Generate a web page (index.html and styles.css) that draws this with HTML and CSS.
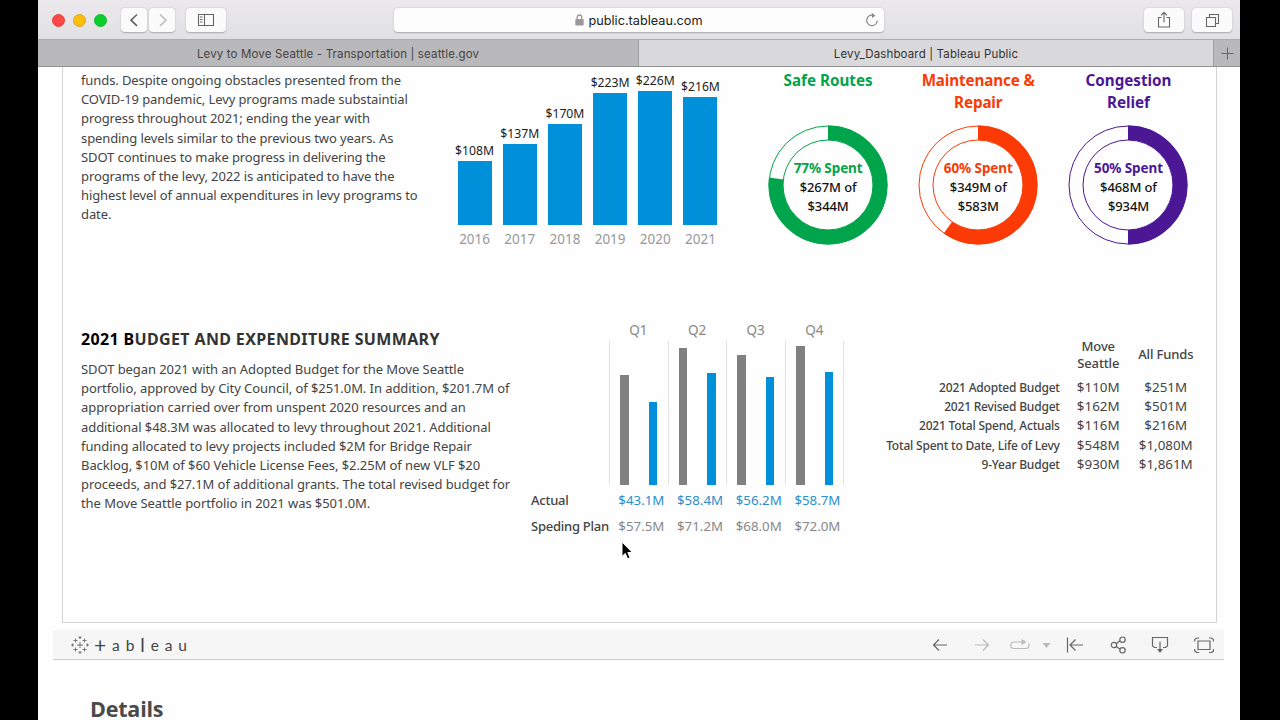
FILE: index.html
```html
<!DOCTYPE html>
<html lang="en">
<head>
  <meta charset="UTF-8" />
  <title>Levy_Dashboard | Tableau Public</title>
  <link rel="stylesheet" href="styles.css">
</head>
<body>
  <div class="browser">
    <!-- TOOLBAR -->
    <header class="toolbar">
      <div class="lights">
        <span class="light red"></span>
        <span class="light yellow"></span>
        <span class="light green"></span>
      </div>
      <div class="history">
        <button class="tool-btn"><svg width="26" height="24" viewBox="0 0 26 24"><path d="M16 6.500l-6 5.700 6 5.700" stroke="#666" stroke-width="1.700" /></svg></button>
        <button class="tool-btn"><svg width="26" height="24" viewBox="0 0 26 24"><path d="M11 6.500l6 5.700-6 5.700" stroke="#bbb" stroke-width="1.500" /></svg></button>
      </div>
      <button class="tool-btn wide"><svg width="40" height="24" viewBox="0 0 40 24"><path d="M12.500 6.500h15v11h-15zM18.500 6.500v11M14 9h2.500M14 11.500h2.500M14 14h2.500" stroke="#666" stroke-width="1.100" /></svg></button>
      <div class="address">
        <svg class="lock" width="9" height="12" viewBox="0 0 9 12"><path d="M2.200 6V3.300a2.300 2.300 0 0 1 4.600 0V6" stroke="#999" stroke-width="1.300" /><rect x="0.300" y="5" width="8.400" height="6.500" rx="0.800" fill="#999" /></svg>
        <span>public.tableau.com</span>
        <svg class="reload" width="14" height="16" viewBox="0 0 14 16"><path d="M8.500 3.300A5.300 5.300 0 1 0 12.300 8.500" stroke="#888" stroke-width="1.200" /><path d="M6.800 0.800l3.700 2.900-3.500 2.400z" fill="#888" /></svg>
      </div>
      <button class="tool-btn wide share"><svg width="40" height="24" viewBox="0 0 40 24"><path d="M17.500 9.500h-3v9.500h11V9.500h-3M20 14.500V4.500M17 7.300l3-3 3 3" stroke="#666" stroke-width="1.100" /></svg></button>
      <button class="tool-btn wide"><svg width="40" height="24" viewBox="0 0 40 24"><path d="M14.500 9.500h9v9h-9zM17.500 9V6.500h9v9H24" stroke="#666" stroke-width="1.100" /></svg></button>
    </header>
    <nav class="tabs">
      <div class="tab">Levy to Move Seattle - Transportation | seattle.gov</div>
      <div class="tab active">Levy_Dashboard | Tableau Public</div>
      <div class="tab-add"><svg width="13" height="13" viewBox="0 0 13 13"><path d="M6.500 0.500v12M0.500 6.500h12" stroke="#666" /></svg></div>
    </nav>

    <!-- DASHBOARD -->
    <main class="dashboard">
      <section class="overview">
        <p class="text">funds. Despite ongoing obstacles presented from the<br>
          COVID-19 pandemic, Levy programs made substaintial<br>
          progress throughout 2021; ending the year with<br>
          spending levels similar to the previous two years. As<br>
          SDOT continues to make progress in delivering the<br>
          programs of the levy, 2022 is anticipated to have the<br>
          highest level of annual expenditures in levy programs to<br>
          date.</p>
        <div class="years">
          <div class="year"><b>$108M</b><i style="height: 64px"></i><span>2016</span></div>
          <div class="year"><b>$137M</b><i style="height: 81px"></i><span>2017</span></div>
          <div class="year"><b>$170M</b><i style="height: 101px"></i><span>2018</span></div>
          <div class="year"><b>$223M</b><i style="height: 132px"></i><span>2019</span></div>
          <div class="year"><b>$226M</b><i style="height: 134px"></i><span>2020</span></div>
          <div class="year"><b>$216M</b><i style="height: 128px"></i><span>2021</span></div>
        </div>
        <div class="donuts">
          <div class="donut safe">
            <h3>Safe Routes</h3>
            <div class="ring">
              <svg width="120" height="120" viewBox="0 0 120 120"><circle cx="60" cy="60" r="59" /><circle cx="60" cy="60" r="45" /><circle class="arc" cx="60" cy="60" r="52.200" pathLength="100" stroke-dasharray="77 100" transform="rotate(-90 60 60)" /></svg>
              <p><b>77% Spent</b><br>$267M of<br>$344M</p>
            </div>
          </div>
          <div class="donut repair">
            <h3>Maintenance &amp;<br>Repair</h3>
            <div class="ring">
              <svg width="120" height="120" viewBox="0 0 120 120"><circle cx="60" cy="60" r="59" /><circle cx="60" cy="60" r="45" /><circle class="arc" cx="60" cy="60" r="52.200" pathLength="100" stroke-dasharray="59.800 100" transform="rotate(-90 60 60)" /></svg>
              <p><b>60% Spent</b><br>$349M of<br>$583M</p>
            </div>
          </div>
          <div class="donut relief">
            <h3>Congestion<br>Relief</h3>
            <div class="ring">
              <svg width="120" height="120" viewBox="0 0 120 120"><circle cx="60" cy="60" r="59" /><circle cx="60" cy="60" r="45" /><circle class="arc" cx="60" cy="60" r="52.200" pathLength="100" stroke-dasharray="50 100" transform="rotate(-90 60 60)" /></svg>
              <p><b>50% Spent</b><br>$468M of<br>$934M</p>
            </div>
          </div>
        </div>
      </section>

      <section class="budget">
        <div class="summary">
          <h2><span>2021 B</span>UDGET AND EXPENDITURE SUMMARY</h2>
          <p class="text">SDOT began 2021 with an Adopted Budget for the Move Seattle<br>
            portfolio, approved by City Council, of $251.0M. In addition, $201.7M of<br>
            appropriation carried over from unspent 2020 resources and an<br>
            additional $48.3M was allocated to levy throughout 2021. Additional<br>
            funding allocated to levy projects included $2M for Bridge Repair<br>
            Backlog, $10M of $60 Vehicle License Fees, $2.25M of new VLF $20<br>
            proceeds, and $27.1M of additional grants. The total revised budget for<br>
            the Move Seattle portfolio in 2021 was $501.0M.</p>
        </div>
        <div class="quarters">
          <div class="q-labels"><span>Actual</span><span>Speding Plan</span></div>
          <div class="quarter">
            <h4>Q1</h4>
            <div class="pane"><i style="height: 110px"></i><i class="actual" style="height: 83px"></i></div>
            <span class="actual-val">$43.1M</span><span>$57.5M</span>
          </div>
          <div class="quarter">
            <h4>Q2</h4>
            <div class="pane"><i style="height: 137px"></i><i class="actual" style="height: 112px"></i></div>
            <span class="actual-val">$58.4M</span><span>$71.2M</span>
          </div>
          <div class="quarter">
            <h4>Q3</h4>
            <div class="pane"><i style="height: 130px"></i><i class="actual" style="height: 108px"></i></div>
            <span class="actual-val">$56.2M</span><span>$68.0M</span>
          </div>
          <div class="quarter">
            <h4>Q4</h4>
            <div class="pane last"><i style="height: 139px"></i><i class="actual" style="height: 113px"></i></div>
            <span class="actual-val">$58.7M</span><span>$72.0M</span>
          </div>
        </div>
        <table class="funds">
          <tr><th></th><th class="move">Move<br>Seattle</th><th>All Funds</th></tr>
          <tr><td>2021 Adopted Budget</td><td>$110M</td><td>$251M</td></tr>
          <tr><td>2021 Revised Budget</td><td>$162M</td><td>$501M</td></tr>
          <tr><td>2021 Total Spend, Actuals</td><td>$116M</td><td>$216M</td></tr>
          <tr><td>Total Spent to Date, Life of Levy</td><td>$548M</td><td>$1,080M</td></tr>
          <tr><td>9-Year Budget</td><td>$930M</td><td>$1,861M</td></tr>
        </table>
      </section>
    </main>

    <!-- TABLEAU BAR -->
    <footer class="tableau-bar">
      <svg class="mark" width="18" height="18" viewBox="0 0 18 18"><path d="M9 6v6M6 9h6M9 0v3M7.500 1.500h3M9 15v3M7.500 16.500h3M1.500 7.500v3M0 9h3M16.500 7.500v3M15 9h3M4.500 2.500v4M2.500 4.500h4M13.500 2.500v4M11.500 4.500h4M4.500 11.500v4M2.500 13.500h4M13.500 11.500v4M11.500 13.500h4" stroke="#777" stroke-width="1" /></svg>
      <div class="wordmark"><span class="plus">+</span><span>a</span><span>b</span><span class="tall">l</span><span>e</span><span>a</span><span>u</span></div>
      <div class="actions">
        <svg width="16" height="16" viewBox="0 0 16 16"><path d="M15 8H1.500M7 2.500L1.500 8 7 13.500" /></svg>
        <svg class="off" width="16" height="16" viewBox="0 0 16 16"><path d="M1 8h13.500M9 2.500L14.500 8 9 13.500" /></svg>
        <svg class="off redo" width="20" height="16" viewBox="0 0 20 16"><path d="M13 5H4a3.200 3.200 0 0 0 0 6.500h12a3.200 3.200 0 0 0 2.500-5" /><path class="fill" d="M11.500 2l5 3-5 3z" /></svg>
        <svg class="off caret" width="9" height="16" viewBox="0 0 9 16"><path class="fill" d="M0.500 6h8l-4 5z" /></svg>
        <svg class="revert" width="18" height="16" viewBox="0 0 18 16"><path d="M1.500 0.500v15M17 8H4M9.500 2.500L4 8l5.500 5.500" /></svg>
        <svg class="share-icon" width="17" height="18" viewBox="0 0 17 18"><path d="M6 7.700l4-3M6 10.300l4 3" /><circle cx="4" cy="9" r="2.700" /><circle cx="12.500" cy="3.700" r="2.700" /><circle cx="12.500" cy="14.300" r="2.700" /></svg>
        <svg class="download" width="18" height="18" viewBox="0 0 18 18"><path d="M6 11.500H3.500L1.500 10V1.500h15V10l-2 1.500H12M9 5.500v9" /><path class="fill" d="M6 13h6l-3 4z" /></svg>
        <svg width="20" height="16" viewBox="0 0 20 16"><path d="M4 4h12v8.500H4zM0.700 4.500V2.500l2-1.500h2.500M15 1h2.500l2 1.500v2M19.500 12v2l-2 1.500H15M5.200 15.500H2.700l-2-1.500v-2" /></svg>
      </div>
    </footer>

    <h1 class="details">Details</h1>
  </div>

  <svg class="cursor" width="14" height="20" viewBox="0 0 14 20"><path d="M1 1v14.500l3.300-3.100 2.300 5.400 2.500-1-2.300-5.300h4.500z" fill="#000" stroke="#fff" stroke-width="1" /></svg>
</body>
</html>
```
FILE: styles.css
```css
* {
  box-sizing: border-box;
  margin: 0;
  padding: 0;
}
body {
  background: #000;
  height: 720px;
  overflow: hidden;
  position: relative;
  font-family: "Noto Sans", sans-serif;
  font-size: 13px;
  color: #444;
}
svg {
  display: block;
  fill: none;
}
.browser {
  width: 1202px;
  height: 720px;
  margin-left: 38px;
  background: #fefefe;
  overflow: hidden;
}

/* toolbar */
.toolbar {
  display: flex;
  align-items: center;
  height: 39px;
  padding: 1px 8px 0 14px;
  background: linear-gradient(#ebe9eb, #e1e0e2);
}
.lights {
  display: flex;
  gap: 8px;
  width: 69px;
}
.light {
  width: 13px;
  height: 13px;
  border-radius: 50%;
  border: 1px solid #e0443e;
  background: #fc4945;
}
.light.yellow {
  background: #fdbe0a;
  border-color: #dfa420;
}
.light.green {
  background: #0bcf2c;
  border-color: #15b62c;
}
.history {
  display: flex;
  gap: 2px;
  margin-right: 11px;
}
.tool-btn {
  width: 26px;
  height: 24px;
  border: 0;
  border-radius: 4px;
  background: #fbfbfb;
  box-shadow: 0 0.5px 1.5px #aaa;
}
.tool-btn.wide {
  width: 40px;
}
.address {
  display: flex;
  align-items: center;
  justify-content: center;
  position: relative;
  width: 490px;
  height: 24px;
  margin-left: 168px;
  background: #fdfdfd;
  border-radius: 4px;
  box-shadow: 0 0.5px 1.5px #aaa;
  font-family: Inter, sans-serif;
  font-size: 12.7px;
  line-height: 22px;
  color: #222;
}
.address span {
  padding-top: 1px;
}
.lock {
  margin-right: 4px;
}
.reload {
  position: absolute;
  right: 5px;
  top: 4px;
}
.share {
  margin-left: auto;
  margin-right: 8px;
}
.tabs {
  display: flex;
  height: 28px;
  border-top: 1px solid #adacae;
  border-bottom: 1px solid #929193;
  background: #b9b8ba;
  font-family: Inter, sans-serif;
  font-size: 11.5px;
  letter-spacing: 0.15px;
}
.tab {
  width: 600px;
  line-height: 28px;
  text-align: center;
  color: #454446;
}
.tab.active {
  width: 576px;
  background: #d9d8da;
  border-left: 1px solid #a0a0a0;
  border-right: 1px solid #a0a0a0;
  color: #333;
}
.tab-add {
  flex: 1;
  display: flex;
  align-items: center;
  justify-content: center;
}

/* dashboard */
.dashboard {
  height: 556px;
  margin: 0 23px 0 24px;
  border: 1px solid #d5d5d5;
  border-top: 0;
}
.text {
  line-height: 19.2px;
  letter-spacing: -0.07px;
  white-space: nowrap;
}
.overview {
  display: flex;
  height: 259px;
  padding: 4px 0 0 18px;
}
.overview .text {
  width: 371px;
  letter-spacing: -0.1px;
}
.years {
  display: flex;
  align-items: flex-end;
  width: 271px;
  height: 177px;
}
.year {
  display: flex;
  flex-direction: column;
  align-items: center;
  width: 45.2px;
}
.year b {
  font-weight: 400;
  font-size: 12.2px;
  line-height: 18px;
  margin-bottom: 1px;
  color: #222;
}
.year i {
  width: 34px;
  background: #008fd9;
}
.year span {
  font-size: 13.5px;
  line-height: 23px;
  margin-top: 3px;
  margin-bottom: -3px;
  color: #999;
}
.donuts {
  display: flex;
  margin-left: 30px;
}
.donut {
  width: 150.2px;
  text-align: center;
}
.donut h3 {
  height: 56px;
  font-size: 15.2px;
  font-weight: 700;
  line-height: 22px;
  margin-top: -2px;
}
.donut.repair h3 {
  letter-spacing: -0.1px;
}
.ring {
  display: grid;
  place-items: center;
}
.ring > * {
  grid-area: 1 / 1;
}
.ring circle {
  stroke: currentColor;
  stroke-width: 1;
}
.ring .arc {
  stroke-width: 14.6px;
}
.ring p {
  font-size: 13px;
  font-weight: 500;
  line-height: 19.2px;
  letter-spacing: -0.1px;
  color: #111;
  padding-top: 5px;
}
.ring b {
  font-size: 13.5px;
  font-weight: 700;
}
.safe, .safe b {
  color: #00a44a;
}
.repair, .repair b {
  color: #fc3a05;
}
.relief, .relief b {
  color: #4b1795;
}

/* budget */
.budget {
  display: flex;
  padding-left: 18px;
}
.summary {
  width: 450px;
}
.summary h2 {
  font-size: 16px;
  font-weight: 700;
  line-height: 26px;
  margin-bottom: 8px;
  letter-spacing: 0.36px;
  color: #333;
  white-space: nowrap;
}
.summary h2 span {
  color: #000;
}
.quarters {
  display: flex;
  margin-top: -6px;
}
.q-labels {
  display: flex;
  flex-direction: column;
  width: 78px;
  padding-top: 168px;
  font-weight: 500;
  line-height: 25.5px;
  letter-spacing: -0.25px;
  white-space: nowrap;
}
.quarter {
  width: 58.7px;
  display: flex;
  flex-direction: column;
  text-align: center;
  line-height: 25.5px;
  color: #888;
}
.quarter h4 {
  font-size: 13.5px;
  font-weight: 400;
  line-height: 20px;
}
.quarter > span {
  font-size: 13.3px;
  padding-left: 6px;
}
.pane {
  display: flex;
  align-items: flex-end;
  gap: 20px;
  height: 144px;
  margin: 1px 0 3px;
  padding-left: 10px;
  border-left: 1px solid #e4e4e4;
}
.pane.last {
  border-right: 1px solid #e4e4e4;
}
.pane i {
  width: 8.5px;
  background: #808080;
}
.pane i.actual {
  background: #008fd9;
}
.quarter .actual-val {
  color: #2a8fcc;
}
.funds {
  border-collapse: collapse;
  margin: 11px 0 0 32px;
  width: 324px;
  height: 137px;
  table-layout: fixed;
}
.funds th {
  font-weight: 500;
  line-height: 17px;
  height: 41px;
  padding-bottom: 6px;
  letter-spacing: -0.15px;
  white-space: nowrap;
}
.funds th:first-child {
  width: 186px;
}
.funds .move {
  width: 73px;
}
.funds td {
  font-size: 13.4px;
  line-height: 19.2px;
  height: 19.2px;
  text-align: center;
}
.funds td:first-child {
  padding-right: 2px;
  font-size: 12px;
  font-weight: 500;
  letter-spacing: -0.2px;
  text-align: right;
  white-space: nowrap;
}
.funds th:last-child,
.funds td:last-child {
  padding-right: 3px;
}

/* tableau bar */
.tableau-bar {
  display: flex;
  align-items: center;
  height: 30px;
  margin: 7px 16px 0 15px;
  padding: 0 10px 0 18px;
  background: #f6f6f6;
  border-bottom: 1px solid #ccc;
}
.wordmark {
  display: flex;
  align-items: center;
  gap: 5.9px;
  margin-left: 5px;
  font-family: Lato, sans-serif;
  font-size: 15.5px;
  line-height: 20px;
  color: #444;
}
.wordmark .plus {
  font-size: 21px;
}
.wordmark .tall {
  font-size: 19px;
}
.actions {
  display: flex;
  align-items: center;
  margin-left: auto;
}
.actions svg {
  margin-left: 26px;
  stroke: #666;
  stroke-width: 1.2;
}
.actions .off {
  stroke: #bbb;
}
.actions .fill {
  fill: #666;
  stroke: none;
}
.actions .off .fill {
  fill: #bbb;
}
.actions .redo {
  margin-left: 20px;
}
.actions .caret {
  margin-left: 12px;
}
.actions .revert {
  margin-left: 15px;
}
.actions .download {
  margin-left: 24px;
}
.actions svg:last-child {
  margin-left: 25px;
}

.details {
  height: 26px;
  margin: 34px 0 0 52px;
  font-family: "Open Sans", sans-serif;
  font-size: 21.5px;
  font-weight: 700;
  line-height: 30px;
  letter-spacing: -0.2px;
  color: #4a4a4a;
}
.cursor {
  position: absolute;
  left: 621px;
  top: 541px;
}
```
